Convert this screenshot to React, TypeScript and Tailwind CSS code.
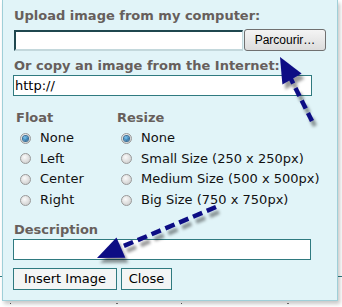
import React from "react";

const Radio = ({ checked = false }: { checked?: boolean }) => (
  <span className="relative w-[11px] h-[11px] rounded-full border border-[#999] bg-[radial-gradient(circle_at_40%_35%,#fafafa,#c6c6c6)] flex items-center justify-center shrink-0">
    {checked && (
      <span className="w-[5px] h-[5px] rounded-full bg-[radial-gradient(circle_at_40%_35%,#7cc8f2,#0a4c86)] shadow-[0_0_0_1px_#3a6f96]" />
    )}
  </span>
);

const Option = ({ label, checked }: { label: string; checked?: boolean }) => (
  <div className="flex items-center h-[20.6px] leading-[20.6px] pl-[4px]">
    <Radio checked={checked} />
    <span className="ml-[9px] text-[#111]">{label}</span>
  </div>
);

const App = () => {
  return (
    <div className="relative w-[342px] h-[307px] bg-white overflow-hidden font-['DejaVu_Sans',Verdana,sans-serif] text-[13px]">
      {/* bits of the page behind the dialog */}
      <div className="absolute left-0 top-[276px] w-[3px] h-px bg-[#2f7a80]" />
      <div className="absolute right-0 top-[276px] w-[5px] h-px bg-[#2f7a80]" />
      <div className="absolute left-[10px] top-[303px] w-px h-px bg-[#555]" />
      <div className="absolute left-[116px] top-[303px] w-[2px] h-px bg-[#777]" />
      <div className="absolute left-[181px] top-[303px] w-px h-px bg-[#555]" />
      <div className="absolute left-[287px] top-[303px] w-[2px] h-px bg-[#777]" />

      <div className="relative ml-[2px] w-[336px] h-[301px] bg-[#e1f4f8] border-x border-b border-[#9fcfd8] shadow-[2px_3px_4px_rgba(0,0,0,0.22)] pl-[11px] pt-[8px]">
        <div className="leading-[16px] font-bold text-[#675f5c]">Upload image from my computer:</div>
        <div className="flex items-start mt-[5px]">
          <div className="mt-[1px] w-[229px] h-[21px] bg-white border-t-2 border-l-2 border-b-2 border-r border-t-[#1f474f] border-l-[#1f474f] border-b-[#c3d8dc] border-r-[#c3d8dc]" />
          <button className="ml-[1px] w-[82px] h-[22px] rounded-[3px] border border-[#707070] bg-gradient-to-b from-[#f4f4f4] to-[#dcdcdc] font-['Liberation_Sans',Arial,sans-serif] text-[12px] text-black leading-[20px]">
            Parcourir…
          </button>
        </div>

        <div className="mt-[7px] leading-[16px] font-bold text-[#675f5c]">Or copy an image from the Internet:</div>
        <div className="mt-[1px] -ml-[1px] w-[299px] h-[21px] bg-white border border-[#2f7a80] pl-[1px] leading-[19px] text-black">
          http://
        </div>

        <div className="mt-[14px] flex">
          <div className="w-[101px] pl-[2px]">
            <div className="leading-[16px] font-bold text-[#675f5c]">Float</div>
            <div className="mt-[2px]">
              <Option label="None" checked />
              <Option label="Left" />
              <Option label="Center" />
              <Option label="Right" />
            </div>
          </div>
          <div className="pl-[2px]">
            <div className="leading-[16px] font-bold text-[#675f5c]">Resize</div>
            <div className="mt-[2px]">
              <Option label="None" checked />
              <Option label="Small Size (250 x 250px)" />
              <Option label="Medium Size (500 x 500px)" />
              <Option label="Big Size (750 x 750px)" />
            </div>
          </div>
        </div>

        <div className="mt-[12px] leading-[16px] font-bold text-[#675f5c]">Description</div>
        <div className="mt-[1px] -ml-[1px] w-[298px] h-[21px] bg-white border border-[#2f7a80]" />

        <div className="mt-[8px] -ml-[1px] flex gap-[4px]">
          <button className="w-[104px] h-[22px] border border-[#2f7a80] bg-[#f3f5f5] text-black leading-[18px]">
            Insert Image
          </button>
          <button className="w-[51px] h-[22px] border border-[#2f7a80] bg-[#f3f5f5] text-black leading-[18px]">
            Close
          </button>
        </div>
      </div>

      {/* annotation arrows drawn over the dialog */}
      <svg className="absolute left-0 top-0 pointer-events-none" width="342" height="307" viewBox="0 0 342 307">
        <defs>
          <filter id="sh" x="-20%" y="-20%" width="140%" height="140%">
            <feDropShadow dx="3" dy="5" stdDeviation="1.6" floodColor="#000" floodOpacity="0.4" />
          </filter>
        </defs>
        <g filter="url(#sh)" fill="#0b0b84" stroke="#0b0b84">
          <line x1="312" y1="121" x2="290" y2="77" strokeWidth="4.5" strokeDasharray="9 5" />
          <polygon points="280,57 301.6,73.6 282.4,84.4" stroke="none" />
          <line x1="216" y1="207" x2="119" y2="248" strokeWidth="4.5" strokeDasharray="10 5" />
          <polygon points="97,258 116.5,237.6 125.3,257.8" stroke="none" />
        </g>
      </svg>
    </div>
  );
};

export default App;
